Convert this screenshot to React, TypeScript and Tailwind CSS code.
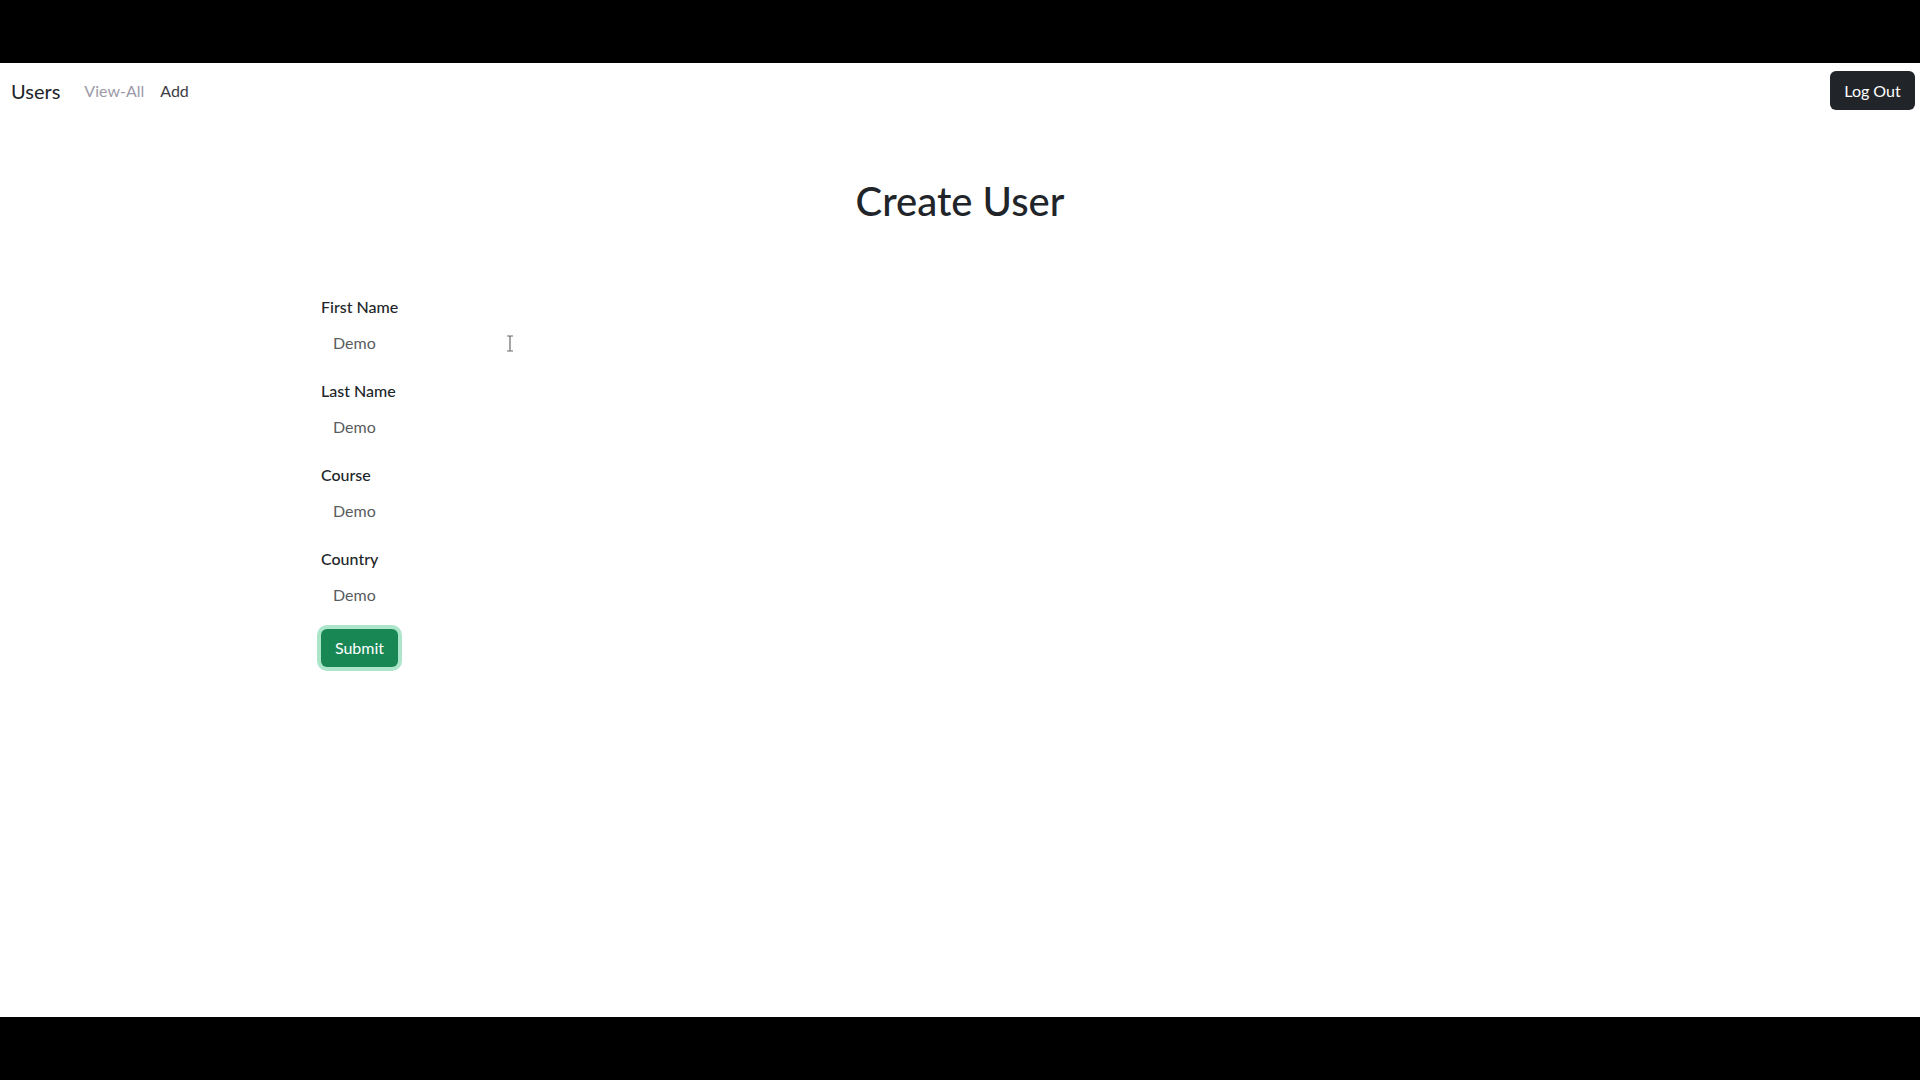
const fields = ["First Name", "Last Name", "Course", "Country"];

export default function App() {
  return (
    <div className="flex h-screen flex-col bg-black font-['Lato',sans-serif] text-[#212529]">
      <div className="h-[63px] shrink-0 bg-black" />

      <main className="relative flex-1 bg-white">
        <nav className="flex h-[55px] items-center pl-[11px] pr-[5px]">
          <a href="#" className="mr-4 text-[20px] leading-[30px] text-[#212529]">
            Users
          </a>
          <a href="#" className="px-2 text-[16px] text-[#9c9aa8]">
            View-All
          </a>
          <a href="#" className="px-2 text-[16px] text-[#3d3d45]">
            Add
          </a>
          <button className="ml-auto h-[39px] w-[85px] rounded-[6px] bg-[#212529] text-[16px] text-white">
            Log Out
          </button>
        </nav>

        <h1 className="mt-[59px] text-center text-[40px] leading-[48px] font-medium">
          Create User
        </h1>

        <form className="mx-auto mt-[70px] w-[1278px]">
          <div className="flex flex-col gap-[22px]">
            {fields.map((f) => (
              <div key={f}>
                <label className="block text-[16px] leading-6 font-medium">{f}</label>
                <input
                  placeholder="Demo"
                  className="block h-[38px] w-full border-0 bg-transparent px-3 pt-[11px] pb-[3px] text-[16px] leading-6 outline-none placeholder:text-[#595c5f]"
                />
              </div>
            ))}
          </div>
          <button
            type="button"
            className="mt-5 h-[38px] w-[77px] rounded-[6px] bg-[#198754] text-[16px] text-white shadow-[0_0_0_4px_#ade5cb]"
          >
            Submit
          </button>
        </form>

        {/* mouse cursor */}
        <svg
          className="absolute left-[506px] top-[272px]"
          width="8"
          height="17"
          viewBox="0 0 8 17"
          fill="none"
        >
          <path d="M1 1h2.5L4 1.6 4.5 1H7M4 1.6v13.8M1 16h2.5l.5-.6.5.6H7" stroke="#6b6b6b" strokeWidth="1.2" />
        </svg>
      </main>

      <div className="h-[63px] shrink-0 bg-black" />
    </div>
  );
}
